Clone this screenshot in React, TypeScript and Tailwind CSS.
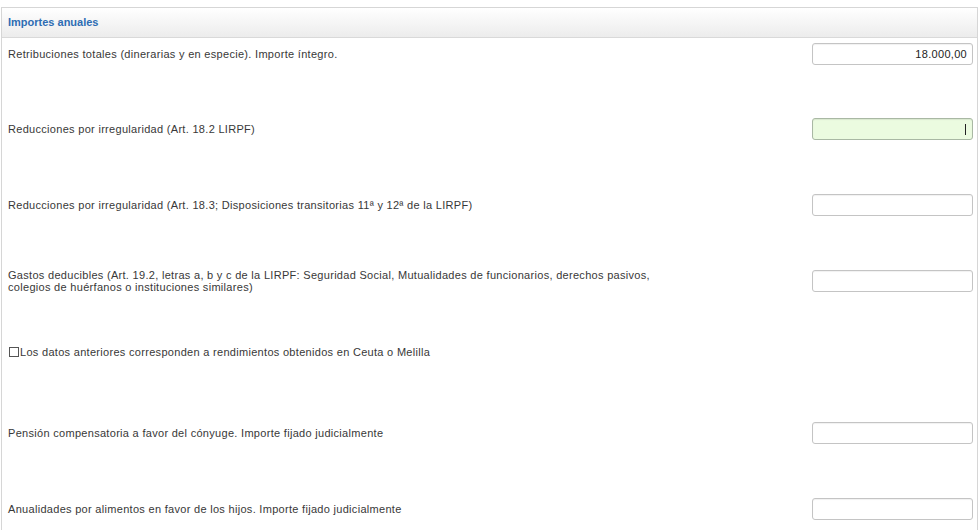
import * as React from "react";

function AmountInput({ value, focused }: { value?: string; focused?: boolean }) {
  return (
    <div
      className={
        "w-[161px] h-[22px] shrink-0 rounded-[3px] border px-[5px] flex items-center justify-end text-[11px] tracking-[0.3px] text-[#222] " +
        (focused
          ? "bg-[#ebfbe0] border-[#a9b8a4] shadow-[inset_0_1px_1px_rgba(0,0,0,0.08)]"
          : "bg-white border-[#c4c4c4] shadow-[inset_0_1px_1px_rgba(0,0,0,0.06)]")
      }
    >
      {value}
      {focused && <span className="inline-block w-px h-[11px] bg-[#222] mr-[1px]" />}
    </div>
  );
}

function Row({
  label,
  value,
  focused,
  className,
}: {
  label: React.ReactNode;
  value?: string;
  focused?: boolean;
  className: string;
}) {
  return (
    <div className={"flex items-center justify-between pl-[6px] pr-[4px] " + className}>
      <p className="text-[11px] leading-[12px] tracking-[0.3px] text-[#383838]">{label}</p>
      <AmountInput value={value} focused={focused} />
    </div>
  );
}

export default function App() {
  return (
    <div
      className="w-[980px] h-[530px] bg-white pt-[7px] pl-[1px] overflow-hidden"
      style={{ fontFamily: '"Liberation Sans", Arial, sans-serif' }}
    >
      <div className="w-[977px] h-[540px] border border-[#d6d6d6] border-b-0">
        {/* Section header */}
        <div className="h-[30px] flex items-center px-[6px] border-b border-[#d9d9d9] bg-gradient-to-b from-white to-[#ececec]">
          <h2 className="text-[11px] font-bold text-[#2e6db3]">Importes anuales</h2>
        </div>

        <Row
          className="mt-[5px] h-[22px]"
          label="Retribuciones totales (dinerarias y en especie). Importe íntegro."
          value="18.000,00"
        />
        <Row className="mt-[53px] h-[22px]" label="Reducciones por irregularidad (Art. 18.2 LIRPF)" focused />
        <Row
          className="mt-[54px] h-[22px]"
          label="Reducciones por irregularidad (Art. 18.3; Disposiciones transitorias 11ª y 12ª de la LIRPF)"
        />
        <Row
          className="mt-[54px] h-[22px]"
          label={
            <>
              Gastos deducibles (Art. 19.2, letras a, b y c de la LIRPF: Seguridad Social, Mutualidades de funcionarios, derechos pasivos,
              <br />
              colegios de huérfanos o instituciones similares)
            </>
          }
        />

        {/* Ceuta / Melilla */}
        <label className="mt-[49px] h-[22px] flex items-center pl-[7px] text-[11px] tracking-[0.3px] text-[#383838]">
          <span className="w-[10px] h-[10px] border border-[#555] bg-white mr-[1px] shrink-0" />
          Los datos anteriores corresponden a rendimientos obtenidos en Ceuta o Melilla
        </label>

        <Row
          className="mt-[59px] h-[22px]"
          label="Pensión compensatoria a favor del cónyuge. Importe fijado judicialmente"
        />
        <Row
          className="mt-[54px] h-[22px]"
          label="Anualidades por alimentos en favor de los hijos. Importe fijado judicialmente"
        />
      </div>
    </div>
  );
}
